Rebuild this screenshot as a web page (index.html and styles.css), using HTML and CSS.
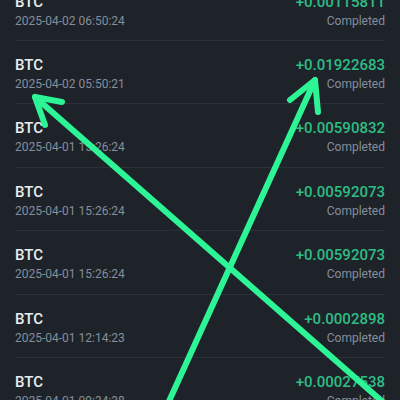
FILE: index.html
```html
<!DOCTYPE html>
<html lang="en">
<head>
  <meta charset="UTF-8">
  <title>Transaction History</title>
  <link rel="stylesheet" href="styles.css">
</head>
<body>
  <div class="history">
    <div class="row">
      <div class="left">
        <div class="coin">BTC</div>
        <div class="time">2025-04-02 06:50:24</div>
      </div>
      <div class="right">
        <div class="amount">+0.00115811</div>
        <div class="status">Completed</div>
      </div>
    </div>
    <div class="row">
      <div class="left">
        <div class="coin">BTC</div>
        <div class="time">2025-04-02 05:50:21</div>
      </div>
      <div class="right">
        <div class="amount">+0.01922683</div>
        <div class="status">Completed</div>
      </div>
    </div>
    <div class="row">
      <div class="left">
        <div class="coin">BTC</div>
        <div class="time">2025-04-01 15:26:24</div>
      </div>
      <div class="right">
        <div class="amount">+0.00590832</div>
        <div class="status">Completed</div>
      </div>
    </div>
    <div class="row">
      <div class="left">
        <div class="coin">BTC</div>
        <div class="time">2025-04-01 15:26:24</div>
      </div>
      <div class="right">
        <div class="amount">+0.00592073</div>
        <div class="status">Completed</div>
      </div>
    </div>
    <div class="row">
      <div class="left">
        <div class="coin">BTC</div>
        <div class="time">2025-04-01 15:26:24</div>
      </div>
      <div class="right">
        <div class="amount">+0.00592073</div>
        <div class="status">Completed</div>
      </div>
    </div>
    <div class="row">
      <div class="left">
        <div class="coin">BTC</div>
        <div class="time">2025-04-01 12:14:23</div>
      </div>
      <div class="right">
        <div class="amount">+0.0002898</div>
        <div class="status">Completed</div>
      </div>
    </div>
    <div class="row">
      <div class="left">
        <div class="coin">BTC</div>
        <div class="time">2025-04-01 09:34:38</div>
      </div>
      <div class="right">
        <div class="amount">+0.00027538</div>
        <div class="status">Completed</div>
      </div>
    </div>
  </div>

  <!-- annotation arrows drawn over the list -->
  <svg class="arrows" width="400" height="400" viewBox="0 0 400 400">
    <g fill="none" stroke="#2df596" stroke-width="6" stroke-linecap="round" stroke-linejoin="round">
      <path d="M392 410 L35 97"/>
      <path d="M62 102 L35 97 L45 125"/>
      <path d="M165 410 L315 80"/>
      <path d="M290 100 L315 80 L318 112"/>
    </g>
  </svg>
</body>
</html>
```

FILE: styles.css
```css
html, body {
  margin: 0;
  height: 400px;
  overflow: hidden;
}
body {
  position: relative;
  background: #1e232a;
  font-family: Roboto, "Liberation Sans", sans-serif;
}
.history {
  margin-top: -22.4px;
}
.row {
  display: flex;
  justify-content: space-between;
  box-sizing: border-box;
  height: 63.4px;
  margin: 0 15px;
  padding-top: 14px;
  border-bottom: 1px solid #2b3139;
}
.coin {
  font-size: 15px;
  line-height: 20px;
  font-weight: 500;
  color: #eaecef;
}
.time {
  margin-top: 1px;
  font-size: 12px;
  line-height: 16px;
  color: #848e9c;
}
.right {
  text-align: right;
}
.amount {
  font-size: 15px;
  line-height: 20px;
  font-weight: 500;
  color: #2ebd85;
}
.status {
  margin-top: 1px;
  font-size: 12px;
  line-height: 16px;
  color: #848e9c;
}
.arrows {
  position: absolute;
  top: 0;
  left: 0;
  pointer-events: none;
}
```
